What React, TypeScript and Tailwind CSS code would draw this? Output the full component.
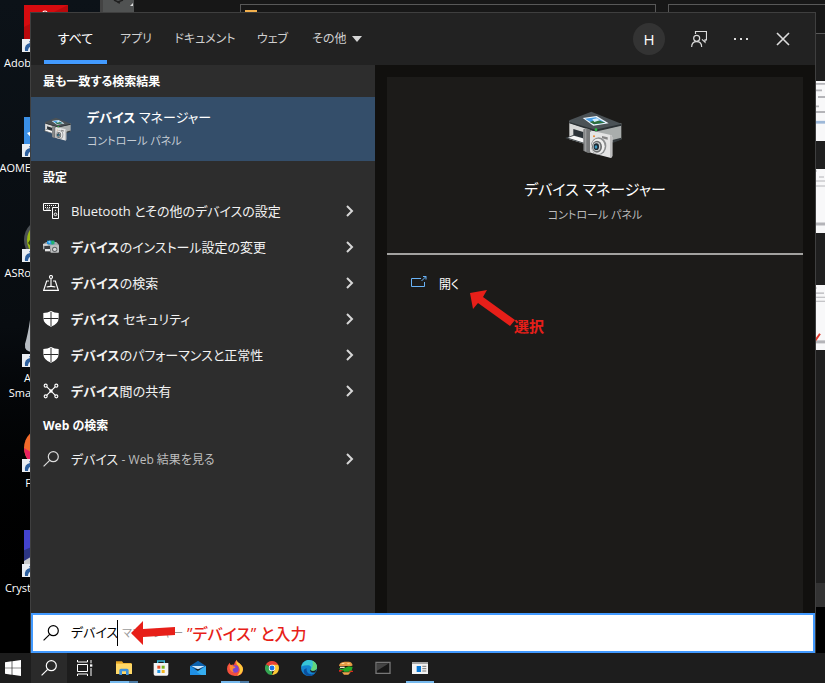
import React, { useState } from "react";

type RowProps = { icon: React.ReactNode; children: React.ReactNode };

function DeviceIcon({ className }: { className: string }) {
  return (
    <svg viewBox="44 331 171 141" className={className} aria-hidden="true">
      <path d="M57 362 135 388v52L57 416z" fill="#d9d9d8" />
      <path d="M135 388 213 368v48l-78 24z" fill="#a9adac" />
      <path d="M57 359 123 333l90 36v5l-78 17-78-24z" fill="#4b5256" />
      <path d="M57 364 135 387l78-17v5l-78 18-78-25z" fill="#2b3134" />
      <path d="m97 352 42-6 36 22-46 7z" fill="#eef6fc" />
      <path d="m104 354 33-4 28 16-34 5z" fill="#4aa0e6" />
      <path d="m118 364 22-7 25 9-34 5z" fill="#2f6f3c" />
      <path d="m126 356 14-3 8 6-16 5z" fill="#d5efff" />
      <path d="M69 385 99 394v20L69 405z" fill="#2c3338" />
      <path d="m45 412 24-9 38 12v16z" fill="#40484c" />
      <path d="m53 411 18-6 34 10-4 11z" fill="#f8f8f8" />
      <path d="M186 418l27-7v6l-27 10z" fill="#33393c" />
      <circle cx="137" cy="387" r="4" fill="#27c840" />
      <path d="M99 386l10-3 14 6v67l-10 1-14-7z" fill="#77797a" />
      <path d="M103 386l5-2v69l-5-2z" fill="#9b9d9e" />
      <path d="M119 394q4-4 9-3l50 11q8 1 8 8v56q0 6-7 5l-55-14q-5-1-5-6z" fill="#e4e4e4" />
      <path d="M179 403q7 2 7 8v55q0 5-7 5z" fill="#bdbdbd" />
      <path d="m155 406 17 4v7l-17-4z" fill="#858585" />
      <circle cx="131" cy="407" r="3" fill="#e8862d" />
      <ellipse cx="145" cy="436" rx="23" ry="26" fill="#8d8f90" />
      <ellipse cx="143" cy="437" rx="20" ry="23" fill="#efefef" />
      <ellipse cx="140" cy="438" rx="15" ry="18" fill="#6b6d6e" />
      <ellipse cx="139" cy="438" rx="11" ry="13" fill="#c9cccd" />
      <ellipse cx="138" cy="438" rx="8" ry="10" fill="#1d2a33" />
      <ellipse cx="137" cy="439" rx="4" ry="5" fill="#3d9ac2" />
    </svg>
  );
}

function SearchGlyph({ className }: { className: string }) {
  return (
    <svg viewBox="0 0 16 16" className={className} fill="none" stroke="currentColor" strokeWidth="1.2" aria-hidden="true">
      <circle cx="10.3" cy="5.7" r="5" />
      <path d="M6.7 9.3.6 15.4" />
    </svg>
  );
}

function KeyboardGlyph() {
  return (
    <svg viewBox="0 0 48 48" className="size-4 text-white" fill="none" stroke="currentColor" strokeWidth="3" aria-hidden="true">
      <path d="M24 22.500H1.500V1.500h45V12" />
      <path d="M6 7.500h36M6 13.500h18" strokeDasharray="3 3" />
      <path d="M9 18h12" strokeWidth="2" />
      <path d="M28.500 13.500h18v33h-18z" />
      <circle cx="37.500" cy="34" r="4" />
      <path d="M36 22h3" />
    </svg>
  );
}

function InstallGlyph() {
  return (
    <svg viewBox="0 0 48 48" className="size-4" aria-hidden="true">
      <path d="M0 15 10 9h30l8 8v14H0z" fill="#a4a8aa" />
      <path d="M12 5h22v11H12z" fill="#1d8fe0" />
      <path d="m14 8 8-4v10z" fill="#7bd0fb" />
      <path d="M24 5h10v9l-8 3z" fill="#25b36a" />
      <path d="M0 15h14v5H0z" fill="#d5d7d8" />
      <path d="M4 21h18v13H4z" fill="#3b3f42" />
      <path d="M6 30h15v7H6z" fill="#e2e2e2" />
      <rect x="22" y="19" width="26" height="22" rx="3" fill="#bfc1c2" />
      <circle cx="35" cy="31" r="8" fill="#606466" />
      <circle cx="35" cy="31" r="5" fill="#d9dadb" />
    </svg>
  );
}

function LocateGlyph() {
  return (
    <svg viewBox="0 0 48 48" className="size-4 text-white" fill="none" stroke="currentColor" strokeWidth="3.5" aria-hidden="true">
      <circle cx="24" cy="6" r="4.500" />
      <path d="M24 11v24" />
      <path d="M18 18h-7L2 46h44l-9-28h-7" />
      <path d="M11 36q13-4 26 0" />
    </svg>
  );
}

function ShieldGlyph() {
  return (
    <svg viewBox="0 0 48 48" className="size-4" aria-hidden="true">
      <path d="M24 0q10 6 23 6v14q0 18-23 27Q1 38 1 20V6q13 0 23-6z" fill="#fff" />
      <path d="M24 3v42M2 22.500h44" stroke="#2d2d2d" strokeWidth="3" />
    </svg>
  );
}

function ShareGlyph() {
  return (
    <svg viewBox="0 0 48 48" className="size-4 text-white" fill="none" stroke="currentColor" strokeWidth="3.5" aria-hidden="true">
      <path d="m11 11 26 26M37 11 11 37" />
      <circle cx="8" cy="8" r="4.500" />
      <circle cx="40" cy="8" r="4.500" />
      <circle cx="8" cy="40" r="4.500" />
      <circle cx="40" cy="40" r="4.500" />
      <circle cx="24" cy="24" r="5" fill="currentColor" stroke="none" />
    </svg>
  );
}

function Chevron() {
  return (
    <svg viewBox="0 0 8 12" className="ml-auto h-3 w-2 shrink-0" fill="none" stroke="#d6d6d6" strokeWidth="2" aria-hidden="true">
      <path d="m1 1 5 5-5 5" />
    </svg>
  );
}

function ResultRow({ icon, children }: RowProps) {
  return (
    <button className="flex h-9 w-full items-center gap-3 whitespace-nowrap pr-[21px] pl-3 text-left text-[13px] text-[#f2f2f2]">
      {icon}
      <span className="pt-0.5">{children}</span>
      <Chevron />
    </button>
  );
}

function SectionTitle({ children }: { children: React.ReactNode }) {
  return <h2 className="flex h-8 items-center px-3 pt-0.5 text-xs font-bold text-white">{children}</h2>;
}

function Shortcut({ label, children }: { label: React.ReactNode; children: React.ReactNode }) {
  return (
    <li className="h-[105px] shrink-0">
      <div className="relative ml-6 h-[47px] w-11">
        {children}
        <svg viewBox="0 0 13 13" className="absolute bottom-0 -left-[2px] size-[13px]" aria-hidden="true">
          <path d="M0 0h13v13H0z" fill="#e9edf2" />
          <path d="M3 12q-1-7 5-8L7 2l5 1v5l-2-1q-4 1-4 5z" fill="#2c5f9e" />
        </svg>
      </div>
      <div className="mt-[3px] flex w-[31px] justify-end text-right text-[11px] leading-[15px] whitespace-nowrap text-white">{label}</div>
    </li>
  );
}

function Desktop() {
  return (
    <div className="absolute inset-0 flex overflow-hidden bg-[#05090d]">
      <ul className="flex w-[100px] flex-col bg-linear-to-b from-[#0c1218] via-[#080c10] to-black pt-[5px]">
        <Shortcut label="Adob">
          <svg viewBox="0 0 44 47" className="h-full w-full" aria-hidden="true">
            <path d="M0 0h44v47H0z" fill="#d60b0f" />
            <path d="M0 22 44 0v47H0z" fill="#b9090c" />
            <path d="M19 8q0-2 2-2t2 2" fill="none" stroke="#fff" strokeWidth="1.200" />
          </svg>
        </Shortcut>
        <Shortcut label="AOME">
          <svg viewBox="0 0 44 47" className="h-full w-full" aria-hidden="true">
            <rect x="-2" y="7" width="44" height="40" rx="3" fill="#3a8fe6" />
            <path d="m3 23 8 9V20z" fill="#fff" />
          </svg>
        </Shortcut>
        <Shortcut label="ASRo">
          <svg viewBox="0 0 44 47" className="h-full w-full" aria-hidden="true">
            <circle cx="22" cy="25" r="22" fill="#4b5054" />
            <circle cx="22" cy="25" r="19" fill="#9ab913" />
            <path d="m4 28 6-9v16z" fill="#35430b" />
          </svg>
        </Shortcut>
        <Shortcut
          label={
            <div className="flex flex-col">
              <div>A</div>
              <div>Sma</div>
            </div>
          }
        >
          <svg viewBox="0 0 44 47" className="h-full w-full" aria-hidden="true">
            <path d="M6 0q-2 14-5 24-1 8 8 8h10V0z" fill="#b6bcc2" />
          </svg>
        </Shortcut>
        <Shortcut label="F">
          <svg viewBox="0 0 44 47" className="h-full w-full" aria-hidden="true">
            <circle cx="20" cy="23" r="20" fill="#f26a2a" />
            <path d="M0 23q9 4 20 20Q2 42 0 23z" fill="#e8205f" />
          </svg>
        </Shortcut>
        <Shortcut label="Cryst">
          <svg viewBox="0 0 44 47" className="h-full w-full" aria-hidden="true">
            <path d="M-2 0h44v47H-2z" fill="#4343cf" />
            <path d="M-2 21 12 15v32H-2z" fill="#2c3583" />
            <path d="m0 31 10-6v10H0z" fill="#c8cacc" />
          </svg>
        </Shortcut>
      </ul>
      <div className="flex flex-1 border-l-[3px] border-[#434343] bg-[#171717]">
        <div className="h-[13px] w-[31px] bg-[#505252]">
          <svg viewBox="0 0 31 13" className="h-full w-full" aria-hidden="true">
            <path d="m11 0 4 2 5-2M14 2l3 1" stroke="#202020" strokeWidth="1.500" fill="none" />
            <path d="M30 3v3h-3z" fill="#ddd" />
          </svg>
        </div>
        <div className="mt-1 ml-[106px] h-[30px] flex-1 border border-[#585858] px-1 py-[5px]">
          <div className="h-[3px] w-3 bg-[#f2b04d]" />
        </div>
        <div className="ml-3 flex w-[157px] flex-col items-end">
          <div className="mt-1 h-[30px] w-full border border-r-0 border-[#585858]" />
          <div className="flex w-[11px] flex-1 flex-col bg-[#1f1f1f]">
            <Thumb className="mt-[47px] h-[60px]">
              <path d="M1 3h10M1 10h7M4 17h7M1 27h4M1 33h10" stroke="#b4b4b8" strokeWidth="2" />
              <path d="M1 44h10" stroke="#9db8d8" strokeWidth="3" />
            </Thumb>
            <Thumb className="mt-7 h-16">
              <path d="M1 2h2M5 8h5M2 12h9M1 17h10" stroke="#b4b4b8" />
              <path d="M1 55h10" stroke="#b4b4b8" strokeWidth="3" />
            </Thumb>
            <Thumb className="mt-[52px] h-[65px]">
              <path d="M1 3h2M2 8h8M2 12h9M1 16h10" stroke="#b4b4b8" />
              <path d="M1 56h10" stroke="#b4b4b8" strokeWidth="3" />
              <path d="m1 55 5-7" stroke="#e03a2f" strokeWidth="2" />
            </Thumb>
            <div className="mt-auto h-6 bg-[#333]" />
            <div className="h-[46px] bg-black" />
          </div>
        </div>
      </div>
    </div>
  );
}

function Thumb({ className, children }: { className: string; children: React.ReactNode }) {
  return (
    <div className={className + " bg-[#f8f8f9]"}>
      <svg viewBox="0 0 11 64" preserveAspectRatio="none" className="h-full w-full" aria-hidden="true">
        {children}
      </svg>
    </div>
  );
}

const iconButton = "flex h-10 w-[42px] items-center justify-center text-[#dcdcdc]";

function Header() {
  return (
    <header className="flex h-[52px] shrink-0 items-center bg-[#222] pr-[11px] pl-[13px] text-xs text-[#d0d0d0]">
      <nav className="flex h-full items-stretch whitespace-nowrap">
        <button className="mb-px w-[63px] border-b-4 border-[#429aff] pt-1 text-[13px] text-white">すべて</button>
        <button className="w-[58px]">アプリ</button>
        <button className="w-20">ドキュメント</button>
        <button className="w-[55px]">ウェブ</button>
        <button className="flex items-center gap-1.5 px-3">
          その他
          <svg viewBox="0 0 10 6" className="h-1.5 w-2.5" aria-hidden="true">
            <path d="M0 0h10L5 6z" fill="#d6d6d6" />
          </svg>
        </button>
      </nav>
      <button className="mr-[13px] ml-auto size-8 rounded-full bg-[#333] text-[15px] text-white">H</button>
      <button className={iconButton} aria-label="フィードバック">
        <svg viewBox="0 0 48 48" className="size-4" fill="none" stroke="currentColor" strokeWidth="3.500" aria-hidden="true">
          <path d="M13.500 9V1.500h33v25H42v7L33 25" />
          <circle cx="17" cy="22" r="9" />
          <path d="M2 48q0-16 15-16t15 16" />
        </svg>
      </button>
      <button className={iconButton} aria-label="オプション">
        <svg viewBox="0 0 14 2" className="h-[2px] w-3.5" fill="currentColor" aria-hidden="true">
          <path d="M0 0h2v2H0zM6 0h2v2H6zM12 0h2v2h-2z" />
        </svg>
      </button>
      <button className={iconButton} aria-label="閉じる">
        <svg viewBox="0 0 14 14" className="size-3.5" fill="none" stroke="currentColor" strokeWidth="1.600" aria-hidden="true">
          <path d="m1 1 12 12M13 1 1 13" />
        </svg>
      </button>
    </header>
  );
}

function Results() {
  return (
    <section className="w-[344px] shrink-0 bg-[#2d2d2d]">
      <SectionTitle>最も一致する検索結果</SectionTitle>
      <button className="flex h-16 w-full items-center gap-4 bg-[#344e6a] pl-3 text-left">
        <DeviceIcon className="h-6 w-7" />
        <span className="flex flex-col whitespace-nowrap">
          <span className="text-[13px] leading-6 text-white"><b>デバイス</b> マネージャー</span>
          <span className="text-[11px] leading-6 text-[#c6cdd5]">コントロール パネル</span>
        </span>
      </button>
      <SectionTitle>設定</SectionTitle>
      <ResultRow icon={<KeyboardGlyph />}>Bluetooth とその他のデバイスの設定</ResultRow>
      <ResultRow icon={<InstallGlyph />}><b>デバイス</b>のインストール設定の変更</ResultRow>
      <ResultRow icon={<LocateGlyph />}><b>デバイス</b>の検索</ResultRow>
      <ResultRow icon={<ShieldGlyph />}><b>デバイス</b> セキュリティ</ResultRow>
      <ResultRow icon={<ShieldGlyph />}><b>デバイス</b>のパフォーマンスと正常性</ResultRow>
      <ResultRow icon={<ShareGlyph />}><b>デバイス</b>間の共有</ResultRow>
      <SectionTitle>Web の検索</SectionTitle>
      <ResultRow icon={<SearchGlyph className="size-4 text-[#dcdcdc]" />}>
        デバイス <span className="text-xs text-[#bdbdbd]">- Web 結果を見る</span>
      </ResultRow>
    </section>
  );
}

function Details() {
  return (
    <section className="flex-1 bg-[#11100e] px-3 pt-3">
      <div className="h-full bg-[#1c1b19]">
        <div className="flex flex-col items-center border-b-2 border-[#a3a2a0] pt-[34px] pb-7">
          <DeviceIcon className="mr-1 h-[47px] w-[57px]" />
          <h1 className="mt-[19px] text-[15px] leading-6 text-white">デバイス マネージャー</h1>
          <p className="mt-1 text-[11px] leading-5 text-[#bdbdbd]">コントロール パネル</p>
        </div>
        <div className="relative px-6 pt-[18px]">
          <button className="flex items-center gap-3 text-xs leading-5 text-white">
            <svg viewBox="0 0 16 12" className="-mt-1 h-3 w-4" fill="none" stroke="#69b3f7" aria-hidden="true">
              <path d="M10 2.500H.5v8h13V6M10.500 5 15 .5M12 .5h3v3" />
            </svg>
            <span className="pt-0.5">開く</span>
          </button>
          <div className="absolute top-[35px] left-[83px] flex items-end">
            <svg viewBox="0 0 46 37" className="h-[37px] w-[46px]" fill="#e71f19" aria-hidden="true">
              <path d="m0 3 17-3-4 7 32 23-5 6L8 13l-5 6z" />
            </svg>
            <span className="-mb-[11px] -ml-[2px] text-[15px] leading-6 font-bold text-[#e71f19]">選択</span>
          </div>
        </div>
      </div>
    </section>
  );
}

function SearchBox() {
  const [query, setQuery] = useState("デバイス");
  return (
    <label className="relative flex h-10 shrink-0 items-center border-2 border-[#429aff] bg-white pl-2.5 text-[13px] text-black">
      <SearchGlyph className="mr-3 size-4" />
      <input
        aria-label="検索"
        className="w-[47px] bg-transparent outline-none"
        value={query}
        onChange={(e) => setQuery(e.target.value)}
      />
      <span className="-ml-px h-[26px] w-px bg-black" />
      <span className="ml-1 text-[11px] text-[#9a9a9a]">マネージャー</span>
      <span className="absolute left-[98px] flex items-center gap-3 text-base whitespace-nowrap text-[#e71f19]">
        <svg viewBox="0 0 44 25" className="h-[25px] w-11" fill="#e71f19" aria-hidden="true">
          <path d="M0 12 12 0v8l32-2v8l-32 2v8z" />
        </svg>
        <span className="pt-0.5 font-medium">”デバイス” と入力</span>
      </span>
    </label>
  );
}

function TaskButton({ label, children, state }: { label: string; children: React.ReactNode; state?: "stacked" | "open" }) {
  return (
    <button aria-label={label} className="relative flex w-[37px] items-center justify-center">
      {children}
      {state && (
        <span className="absolute bottom-0 flex h-[2px] w-7 bg-[#76b9ed]">
          {state === "stacked" && <span className="ml-auto w-[9px] bg-[#4c7ba5]" />}
        </span>
      )}
    </button>
  );
}

function Taskbar() {
  return (
    <footer className="flex h-[30px] shrink-0 items-stretch bg-[#1d1d1d] text-white">
      <button aria-label="スタート" className="flex w-[31px] items-center pl-[5px]">
        <svg viewBox="0 0 48 48" className="size-4" fill="currentColor" aria-hidden="true">
          <path d="M0 7 20 4v19H0zM22 4 48 0v23H22zM0 25h20v19L0 41zM22 25h26v23l-26-4z" />
        </svg>
      </button>
      <button aria-label="検索" className="flex w-9 items-center justify-center bg-[#2a2a2a]">
        <SearchGlyph className="size-4" />
      </button>
      <button aria-label="タスク ビュー" className="mr-0.5 flex w-9 items-center justify-center">
        <svg viewBox="0 0 48 48" className="size-4" fill="none" stroke="currentColor" strokeWidth="3" aria-hidden="true">
          <path d="M1.500 0v6h30V0M1.500 48v-6h30v6M1.500 13.500h30v21h-30zM42 0v10M42 24v24" />
          <path d="M39 13h7v7h-7z" fill="currentColor" stroke="none" />
        </svg>
      </button>
      <TaskButton label="エクスプローラー" state="stacked">
        <svg viewBox="0 0 48 48" className="size-4" aria-hidden="true">
          <path d="M0 4h18l4 5h24v9H0z" fill="#e9a825" />
          <path d="M0 11h48v31H0z" fill="#ffd867" />
          <path d="M10 45V31q0-5 5-5h18q5 0 5 5v14h-8V34H18v11z" fill="#3d91dc" />
        </svg>
      </TaskButton>
      <TaskButton label="ストア">
        <svg viewBox="0 0 48 48" className="size-4" aria-hidden="true">
          <path d="M14 12V3h20v9" fill="none" stroke="#35b7dc" strokeWidth="4" />
          <path d="M2 9h44v33q0 5-5 5H7q-5 0-5-5z" fill="#f4f4f4" />
          <path d="M13 17h9v9h-9z" fill="#e8502a" />
          <path d="M26 17h9v9h-9z" fill="#78b41c" />
          <path d="M13 30h9v9h-9z" fill="#2396e2" />
          <path d="M26 30h9v9h-9z" fill="#f5b51b" />
        </svg>
      </TaskButton>
      <TaskButton label="メール">
        <svg viewBox="0 0 48 48" className="size-4" aria-hidden="true">
          <path d="M0 18 24 2l24 16v8H0z" fill="#0c61ad" />
          <path d="M0 18v27h48V18L24 33z" fill="#1f8fe4" />
          <path d="M4 18h40L24 28z" fill="#cfe6f7" />
          <path d="m48 18-28 18 14 9h14z" fill="#36aef0" />
        </svg>
      </TaskButton>
      <TaskButton label="Firefox" state="stacked">
        <svg viewBox="0 0 48 48" className="size-4" aria-hidden="true">
          <path d="M8 8q1 5 4 7 5-3 9-1 1-8 8-14 1 7 8 10 11 8 11 19-2 19-24 19Q1 46 0 27 0 16 8 8z" fill="#f5503d" />
          <path d="M29 0q1 7 8 10 11 8 11 19-3 15-18 18 10-9 8-20-2-9-9-14-3-6 0-13z" fill="#ffcb3b" />
          <circle cx="24" cy="27" r="11" fill="#7b45d2" />
          <path d="M8 15q8-1 11 4l7 2q-2 4-8 5-3 8 5 11-12 1-15-12z" fill="#ff8a2f" />
        </svg>
      </TaskButton>
      <TaskButton label="Chrome">
        <svg viewBox="0 0 48 48" className="size-3.5" aria-hidden="true">
          <path d="M24 24 3.200 12a24 24 0 0 1 41.600 0z" fill="#e94335" />
          <path d="M24 24 3.200 12A24 24 0 0 0 24 48z" fill="#34a652" />
          <path d="M24 13h21.300A24 24 0 0 1 24 48l9-18z" fill="#fcc934" />
          <circle cx="24" cy="24" r="11" fill="#fff" />
          <circle cx="24" cy="24" r="8.500" fill="#1a73e8" />
        </svg>
      </TaskButton>
      <TaskButton label="Edge">
        <svg viewBox="0 0 48 48" className="size-4" aria-hidden="true">
          <circle cx="24" cy="24" r="24" fill="#1384d0" />
          <path d="M1 20C4 7 13 0 24 0c16 0 24 12 24 21 0 8-6 12-13 12-5 0-7-2-5-5 3-6-2-12-10-12Q8 16 1 20z" fill="#37c4d6" />
          <path d="M34 2c10 4 14 12 14 19 0 8-6 12-13 12-5 0-7-2-5-5 4-8 8-13 4-26z" fill="#62d67c" />
          <path d="M17 25q-3 14 12 18 8 1 14-5-7 10-19 10-14-1-16-14 0-7 9-9z" fill="#0b4f9e" />
          <path d="M30 28q-2 5 6 5 7 0 11-6l-4 10q-9 2-14-2-4-3 1-7z" fill="#1d1d1d" />
        </svg>
      </TaskButton>
      <TaskButton label="バーガー">
        <svg viewBox="0 0 48 48" className="size-4" aria-hidden="true">
          <path d="M3 17Q4 6 20 5h12q10 1 12 11l-8 4H8z" fill="#e69a45" />
          <path d="M11 9h8v3h-8zM28 10h7v3h-7z" fill="#ffe0a0" />
          <path d="M6 18h36v6H6z" fill="#2b1a0c" />
          <path d="M6 20h14v4H6z" fill="#f0e8c8" />
          <path d="m2 24 10 3 20-8 12 2-4 14H10z" fill="#24a928" />
          <path d="M3 30h11v5H3zM34 32h11v4H34z" fill="#d92a1c" />
          <path d="M10 32h8v5h-8z" fill="#153a10" />
          <path d="M12 37h26l-7 7H18z" fill="#eda44d" />
        </svg>
      </TaskButton>
      <TaskButton label="ターミナル">
        <svg viewBox="0 0 48 48" className="size-4" aria-hidden="true">
          <path d="M3 7h42v33H3z" fill="#171717" stroke="#777" strokeWidth="4" />
          <path d="M6 10h36L6 32z" fill="#444" />
        </svg>
      </TaskButton>
      <TaskButton label="アプリ ウィンドウ" state="open">
        <svg viewBox="0 0 48 48" className="size-4" aria-hidden="true">
          <path d="M0 6h48v36H0z" fill="#f2f2f2" />
          <path d="M0 6h48v6H0z" fill="#a7a7a7" />
          <path d="M14 18h13v18H14z" fill="#0877d4" />
          <path d="M31 19h12M31 26h12M31 33h12" stroke="#777" strokeWidth="3" />
        </svg>
      </TaskButton>
    </footer>
  );
}

export default function App() {
  return (
    <div className="flex h-screen flex-col overflow-hidden bg-black font-['Open_Sans','Noto_Sans_CJK_JP',sans-serif] [font-feature-settings:'palt']">
      <div className="relative flex min-h-0 flex-1 pt-3 pr-[9px] pl-[30px]">
        <Desktop />
        <main className="relative flex flex-1 flex-col border border-b-0 border-[#3f3f3f]">
          <Header />
          <div className="flex min-h-0 flex-1">
            <Results />
            <Details />
          </div>
          <SearchBox />
        </main>
      </div>
      <Taskbar />
    </div>
  );
}
